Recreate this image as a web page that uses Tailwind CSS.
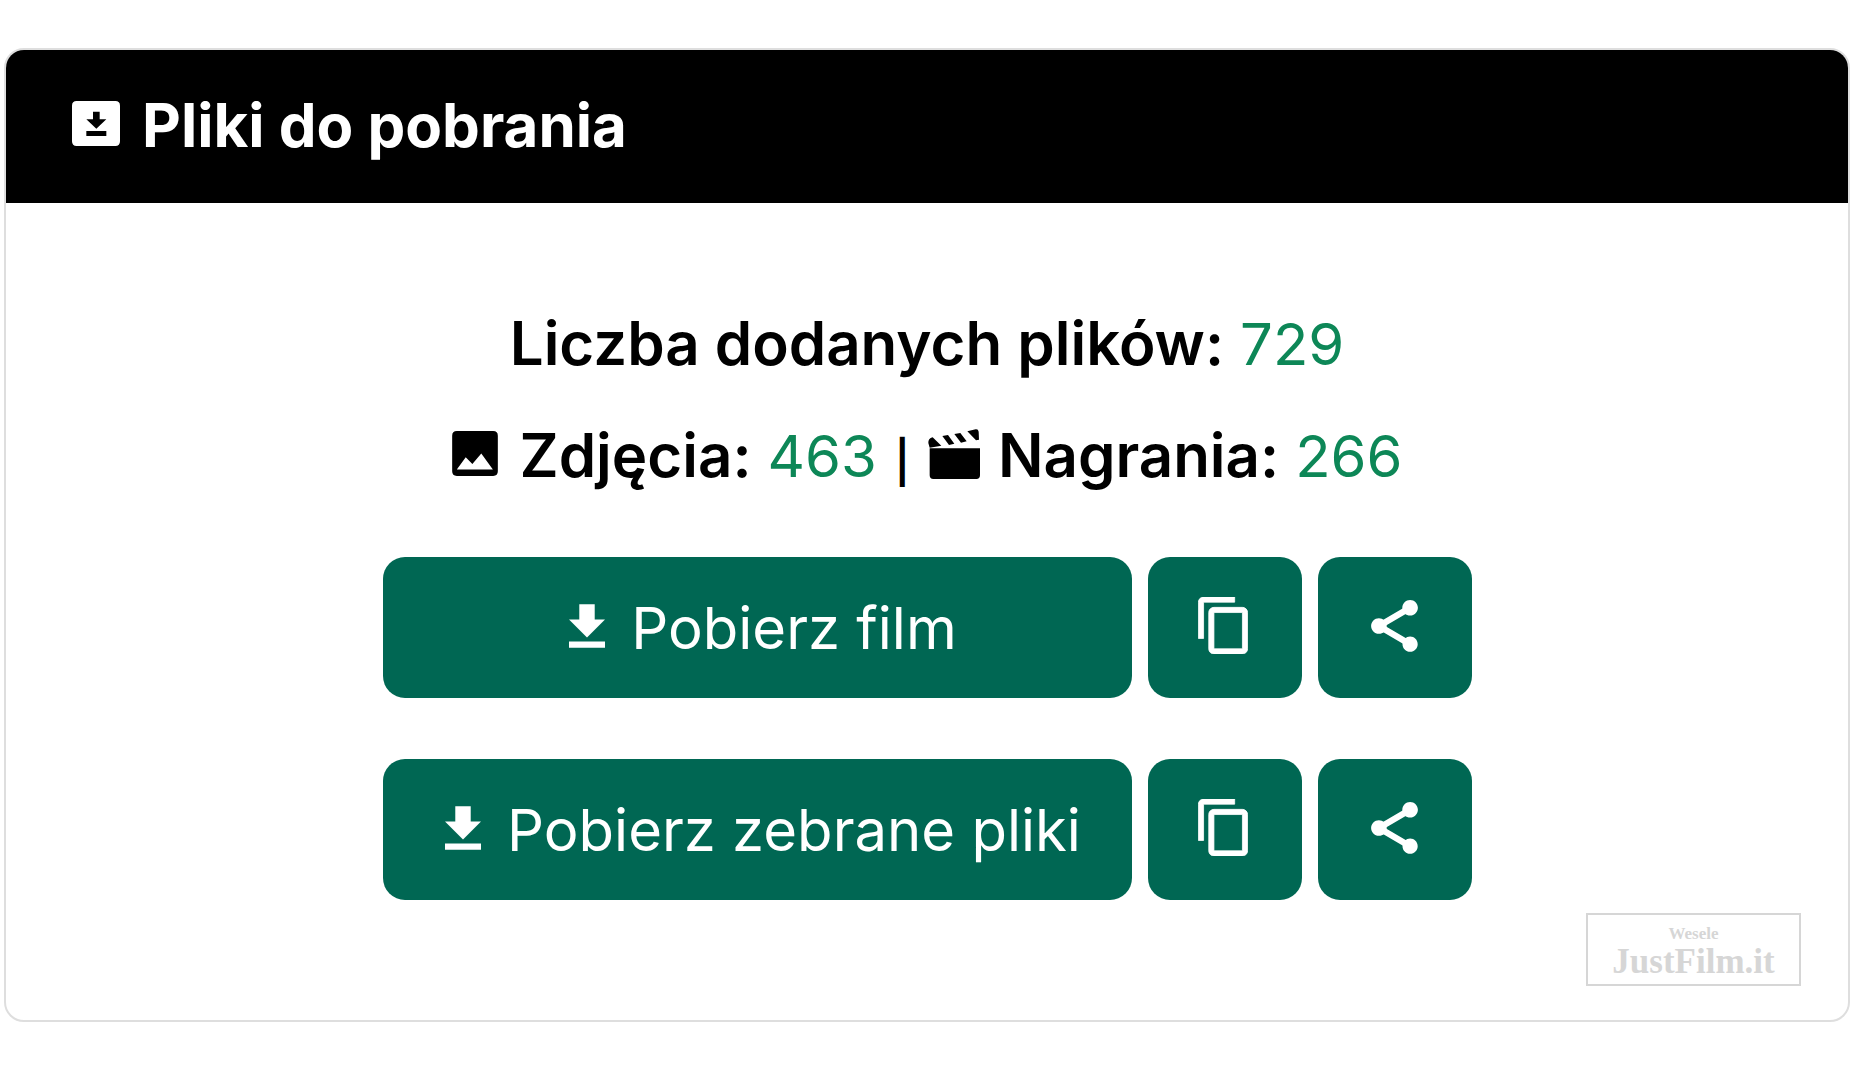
<!DOCTYPE html>
<html lang="pl">
<head>
<meta charset="utf-8">
<meta name="viewport" content="width=device-width, initial-scale=1">
<title>Pliki do pobrania</title>
<script src="https://cdn.jsdelivr.net/npm/@tailwindcss/browser@4"></script>
</head>
<body class="bg-white text-black font-['Inter',sans-serif]">
<svg class="hidden" aria-hidden="true">
  <symbol id="download" viewBox="5 3 14 17"><path d="M19 9h-4V3H9v6H5l7 7 7-7zM5 17.500v2.500h14v-2.500H5z"/></symbol>
  <symbol id="copy" viewBox="2 1 19 22"><path d="M16 1H4c-1.100 0-2 .9-2 2v14h2V3h12V1zm3 4H8c-1.100 0-2 .9-2 2v14c0 1.100.9 2 2 2h11c1.100 0 2-.9 2-2V7c0-1.100-.9-2-2-2zm0 16H8V7h11v14z" stroke="currentColor" stroke-width=".3"/></symbol>
  <symbol id="share" viewBox="3 2 18 20"><path d="M18 16.080c-.76 0-1.440.3-1.960.77L8.910 12.700c.05-.23.09-.46.09-.7s-.04-.47-.09-.7l7.050-4.110c.54.5 1.250.81 2.040.81 1.660 0 3-1.340 3-3s-1.340-3-3-3-3 1.340-3 3c0 .24.04.47.09.7L8.040 9.810C7.500 9.310 6.790 9 6 9c-1.660 0-3 1.340-3 3s1.340 3 3 3c.79 0 1.500-.31 2.040-.81l7.120 4.160c-.05.21-.08.43-.08.65 0 1.610 1.310 2.920 2.920 2.920s2.920-1.310 2.920-2.920-1.310-2.920-2.920-2.920z"/><path d="M18 5L6 12l12 7" fill="none" stroke="currentColor" stroke-width="2.400"/></symbol>
</svg>
<main class="px-1 pt-12">
  <section class="overflow-hidden rounded-[20px] border-2 border-[#dedede]">
    <header class="flex items-start gap-[22px] bg-black px-[66px] pt-[39px] pb-[42px] text-white">
      <svg class="mt-3 h-[45px] w-12 shrink-0" viewBox="0 0 144 135" aria-hidden="true">
        <path fill="currentColor" fill-rule="evenodd" d="M14 0H130Q144 0 144 14V121Q144 135 130 135H14Q0 135 0 121V14Q0 0 14 0ZM63 32V55H43L73 83L103 55H83V32ZM43 90V105H103V90Z"/>
      </svg>
      <h1 class="text-[60px] leading-[72px] font-bold">Pliki do pobrania</h1>
    </header>
    <div class="flex flex-col items-center pt-[104px] pb-[34px]">
      <p class="flex items-baseline gap-4 text-[58px] leading-[72px]"><strong class="text-[60px] font-semibold">Liczba dodanych plików:</strong><span class="text-[#0d8757]">729</span></p>
      <p class="mt-[39px] flex items-baseline gap-[18px] text-[58px] leading-[72px]">
        <svg class="mt-3 mr-1 h-[45px] w-[46px] shrink-0 self-start" viewBox="0 0 138 136" aria-hidden="true">
          <path fill-rule="evenodd" d="M14 0H124Q138 0 138 14V122Q138 136 124 136H14Q0 136 0 122V14Q0 0 14 0ZM14 116H123L88 68L61 100L41 79Z"/>
        </svg>
        <span class="flex items-baseline gap-4"><strong class="text-[60px] font-semibold">Zdjęcia:</strong><span class="text-[#0d8757]">463</span></span>
        <span class="text-[42px] font-semibold">|</span>
        <svg class="mt-[10px] h-[50px] w-[52px] shrink-0 self-start" viewBox="87 55 156 150" aria-hidden="true">
          <path d="M92 113H243V194Q243 205 232 205H103Q92 205 92 194ZM92 111L88 97Q87 84 101 80L127 105ZM130 76L147 73L166 99L150 103ZM166 70L184 67L203 92L186 96ZM205 62L230 56Q238 55 239 63L240 87L231 89Z"/>
        </svg>
        <span class="flex items-baseline gap-4"><strong class="text-[60px] font-semibold">Nagrania:</strong><span class="text-[#0d8757]">266</span></span>
      </p>
      <div class="mt-[59px] flex gap-4 text-[58px] leading-[72px] text-white">
        <button type="button" class="flex h-[141px] w-[749px] items-center justify-center gap-[26px] rounded-[22px] bg-[#006753] pl-3"><svg class="mb-1 h-11 w-9 fill-current" aria-hidden="true"><use href="#download"/></svg>Pobierz film</button>
        <button type="button" aria-label="Kopiuj link do filmu" class="flex h-[141px] w-[154px] items-center justify-center rounded-[22px] bg-[#006753] pr-1"><svg class="mb-1 h-[57px] w-[50px] fill-current" aria-hidden="true"><use href="#copy"/></svg></button>
        <button type="button" aria-label="Udostępnij film" class="flex h-[141px] w-[154px] items-center justify-center rounded-[22px] bg-[#006753]"><svg class="mb-1 h-[52px] w-[47px] fill-current" aria-hidden="true"><use href="#share"/></svg></button>
      </div>
      <div class="mt-[61px] flex gap-4 text-[58px] leading-[72px] text-white">
        <button type="button" class="flex h-[141px] w-[749px] items-center justify-center gap-[26px] rounded-[22px] bg-[#006753] pl-3"><svg class="mb-1 h-11 w-9 fill-current" aria-hidden="true"><use href="#download"/></svg>Pobierz zebrane pliki</button>
        <button type="button" aria-label="Kopiuj link do plików" class="flex h-[141px] w-[154px] items-center justify-center rounded-[22px] bg-[#006753] pr-1"><svg class="mb-1 h-[57px] w-[50px] fill-current" aria-hidden="true"><use href="#copy"/></svg></button>
        <button type="button" aria-label="Udostępnij pliki" class="flex h-[141px] w-[154px] items-center justify-center rounded-[22px] bg-[#006753]"><svg class="mb-1 h-[52px] w-[47px] fill-current" aria-hidden="true"><use href="#share"/></svg></button>
      </div>
      <div class="mt-[13px] mr-[47px] flex h-[73px] w-[215px] flex-col items-center self-end border-2 border-[#d6d6d6] pt-[9px] font-['Liberation_Serif',serif] font-bold text-[#d6d6d6]">
        <span class="text-[17px] leading-5">Wesele</span>
        <span class="text-[35px] leading-9">JustFilm.it</span>
      </div>
    </div>
  </section>
</main>
</body>
</html>
